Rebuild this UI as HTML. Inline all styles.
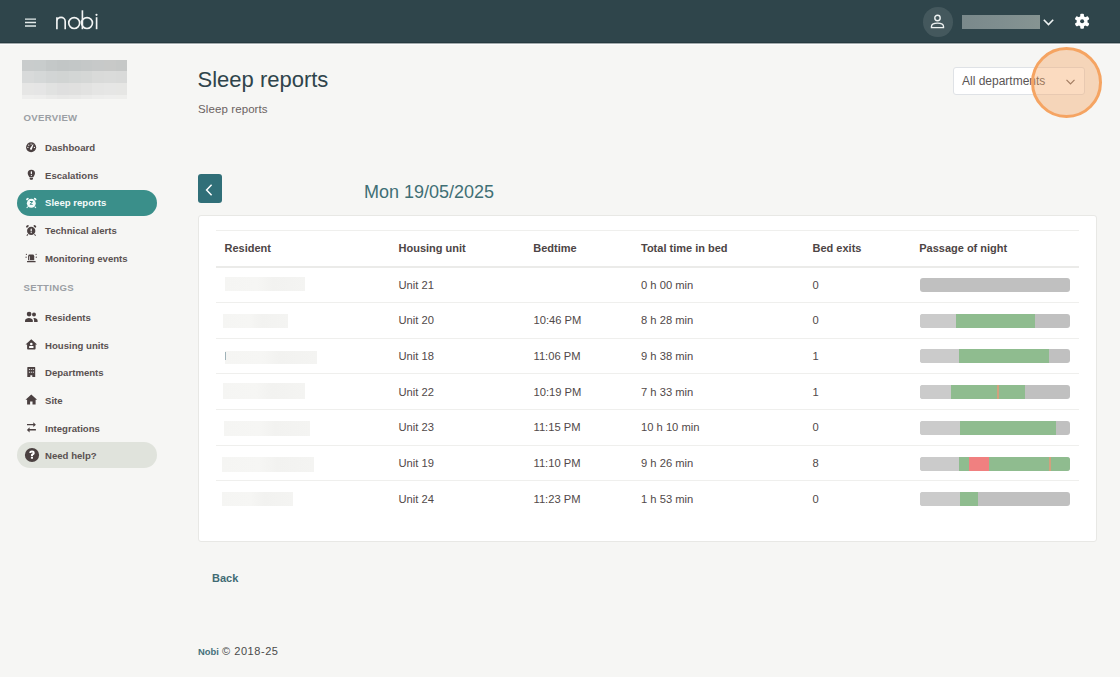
<!DOCTYPE html>
<html><head><meta charset="utf-8">
<style>
*{margin:0;padding:0;box-sizing:border-box}
html,body{width:1120px;height:677px;overflow:hidden;background:#f6f6f4;font-family:"Liberation Sans",sans-serif;position:relative}
.a{position:absolute;white-space:nowrap;line-height:1}
#hdr{position:absolute;left:0;top:0;width:1120px;height:43px;background:#2f454b;border-bottom:1px solid #263a40}
.nav{font-size:9.6px;font-weight:700;color:#5a5151;left:45px}
.sec{font-size:9.6px;font-weight:700;color:#9b9fa4;left:23.5px;letter-spacing:0.3px}
.ic{position:absolute;left:24px;width:14px;height:14px}
.th{font-size:11px;font-weight:700;color:#4d4545}
.td{font-size:11.2px;color:#514949}
.hl{position:absolute;left:215.5px;width:863.5px;height:1px;background:#efefed}
.bar{position:absolute;left:919.5px;width:150.5px;height:14px;border-radius:3px;overflow:hidden;background:#c0c0c0}
.bar i{position:absolute;top:0;height:14px;display:block}
.nm{position:absolute;height:14px;background:linear-gradient(90deg,#f5f5f3,#f6f6f4 40%,#f2f2f0 60%,#f4f4f2);filter:blur(0.7px)}
</style></head><body>
<div id="hdr"></div>
<div class="a" style="left:0;top:43px;width:1120px;height:1px;background:#a3abad"></div><div class="a" style="left:0;top:44px;width:1120px;height:1px;background:#fdfdfd"></div>
<!-- hamburger -->
<svg class="a" style="left:24px;top:14px" width="14" height="16" viewBox="0 0 14 16"><g stroke="#e4ebeb" stroke-width="1.45"><path d="M1 5.1H12M1 8.5H12M1 12H12"/></g></svg>
<!-- nobi logo -->
<svg class="a" style="left:54px;top:8px" width="48" height="24" viewBox="0 0 48 24">
 <g fill="none" stroke="#f2f4f4" stroke-width="1.65">
  <path d="M2.9 9.3V21.2M2.9 13.5A4.15 4.15 0 0 1 11.2 13.5V21.2"/>
  <circle cx="20.2" cy="15.05" r="5.45"/>
  <path d="M28.4 2.3V21.2"/>
  <circle cx="33" cy="15.05" r="5.45"/>
  <path d="M42.6 9.2V21.2"/>
 </g>
 <circle cx="42.5" cy="6.8" r="1.1" fill="#f2f4f4"/>
</svg>
<!-- avatar -->
<div class="a" style="left:923px;top:7px;width:29.5px;height:29.5px;border-radius:50%;background:#44585d"></div>
<svg class="a" style="left:930px;top:14px" width="15" height="15" viewBox="0 0 15 15">
 <g fill="none" stroke="#eef2f2" stroke-width="1.4">
  <circle cx="7.5" cy="4" r="2.7"/>
  <path d="M1.5 13.6v-1.2c0-2 2.6-3.3 6-3.3s6 1.3 6 3.3v1.2z"/>
 </g>
</svg>
<div class="a" style="left:962px;top:14.5px;width:78px;height:14.5px;background:linear-gradient(90deg,#7a898b,#7f8e8f 50%,#869492)"></div>
<svg class="a" style="left:1042px;top:17px" width="13" height="11" viewBox="0 0 13 11">
 <path d="M1.8 2.8L6.5 7.6L11.2 2.8" fill="none" stroke="#eef2f2" stroke-width="1.6"/>
</svg>
<svg class="a" style="left:1070px;top:9px" width="24" height="24" viewBox="0 0 24 24"><g transform="translate(12.1,12.3)" fill="#fff"><circle r="5.4"/><rect x="-1.85" y="-7.55" width="3.7" height="4.2" rx="1.1" transform="rotate(0)"/><rect x="-1.85" y="-7.55" width="3.7" height="4.2" rx="1.1" transform="rotate(60)"/><rect x="-1.85" y="-7.55" width="3.7" height="4.2" rx="1.1" transform="rotate(120)"/><rect x="-1.85" y="-7.55" width="3.7" height="4.2" rx="1.1" transform="rotate(180)"/><rect x="-1.85" y="-7.55" width="3.7" height="4.2" rx="1.1" transform="rotate(240)"/><rect x="-1.85" y="-7.55" width="3.7" height="4.2" rx="1.1" transform="rotate(300)"/><circle r="2" fill="#2f454b"/></g></svg>

<!-- SIDEBAR -->
<div class="a" style="left:22.2px;top:60px;width:105px;height:38.5px;overflow:hidden"><i style="position:absolute;left:0.00px;top:0.00px;width:11.97px;height:11.40px;background:#c9cccc"></i><i style="position:absolute;left:11.67px;top:0.00px;width:11.97px;height:11.40px;background:#c8cccc"></i><i style="position:absolute;left:23.33px;top:0.00px;width:11.97px;height:11.40px;background:#c4c8c8"></i><i style="position:absolute;left:35.00px;top:0.00px;width:11.97px;height:11.40px;background:#c2c6c6"></i><i style="position:absolute;left:46.67px;top:0.00px;width:11.97px;height:11.40px;background:#c3c7c7"></i><i style="position:absolute;left:58.33px;top:0.00px;width:11.97px;height:11.40px;background:#c5c8c8"></i><i style="position:absolute;left:70.00px;top:0.00px;width:11.97px;height:11.40px;background:#c7c9c9"></i><i style="position:absolute;left:81.67px;top:0.00px;width:11.97px;height:11.40px;background:#c8c9c8"></i><i style="position:absolute;left:93.33px;top:0.00px;width:11.97px;height:11.40px;background:#c6c8c7"></i><i style="position:absolute;left:0.00px;top:11.10px;width:11.97px;height:12.10px;background:#d8dada"></i><i style="position:absolute;left:11.67px;top:11.10px;width:11.97px;height:12.10px;background:#d5d8d8"></i><i style="position:absolute;left:23.33px;top:11.10px;width:11.97px;height:12.10px;background:#d2d5d5"></i><i style="position:absolute;left:35.00px;top:11.10px;width:11.97px;height:12.10px;background:#d1d4d3"></i><i style="position:absolute;left:46.67px;top:11.10px;width:11.97px;height:12.10px;background:#d3d6d5"></i><i style="position:absolute;left:58.33px;top:11.10px;width:11.97px;height:12.10px;background:#d5d7d6"></i><i style="position:absolute;left:70.00px;top:11.10px;width:11.97px;height:12.10px;background:#d9dad9"></i><i style="position:absolute;left:81.67px;top:11.10px;width:11.97px;height:12.10px;background:#dadbda"></i><i style="position:absolute;left:93.33px;top:11.10px;width:11.97px;height:12.10px;background:#d9dad9"></i><i style="position:absolute;left:0.00px;top:22.90px;width:11.97px;height:12.10px;background:#e6e6e5"></i><i style="position:absolute;left:11.67px;top:22.90px;width:11.97px;height:12.10px;background:#e5e5e5"></i><i style="position:absolute;left:23.33px;top:22.90px;width:11.97px;height:12.10px;background:#e1e2e1"></i><i style="position:absolute;left:35.00px;top:22.90px;width:11.97px;height:12.10px;background:#dfdfdf"></i><i style="position:absolute;left:46.67px;top:22.90px;width:11.97px;height:12.10px;background:#e0e0df"></i><i style="position:absolute;left:58.33px;top:22.90px;width:11.97px;height:12.10px;background:#e2e2e1"></i><i style="position:absolute;left:70.00px;top:22.90px;width:11.97px;height:12.10px;background:#e5e5e4"></i><i style="position:absolute;left:81.67px;top:22.90px;width:11.97px;height:12.10px;background:#e6e6e5"></i><i style="position:absolute;left:93.33px;top:22.90px;width:11.97px;height:12.10px;background:#e6e6e4"></i><i style="position:absolute;left:0.00px;top:34.70px;width:11.97px;height:4.10px;background:#eeeeed"></i><i style="position:absolute;left:11.67px;top:34.70px;width:11.97px;height:4.10px;background:#ededec"></i><i style="position:absolute;left:23.33px;top:34.70px;width:11.97px;height:4.10px;background:#eaeae9"></i><i style="position:absolute;left:35.00px;top:34.70px;width:11.97px;height:4.10px;background:#e8e8e7"></i><i style="position:absolute;left:46.67px;top:34.70px;width:11.97px;height:4.10px;background:#e9e9e8"></i><i style="position:absolute;left:58.33px;top:34.70px;width:11.97px;height:4.10px;background:#ebebea"></i><i style="position:absolute;left:70.00px;top:34.70px;width:11.97px;height:4.10px;background:#ededec"></i><i style="position:absolute;left:81.67px;top:34.70px;width:11.97px;height:4.10px;background:#eeeeed"></i><i style="position:absolute;left:93.33px;top:34.70px;width:11.97px;height:4.10px;background:#eeeeec"></i></div>
<div class="a sec" style="top:113.1px">OVERVIEW</div>

<div class="a" style="left:17px;top:190px;width:140px;height:26px;border-radius:13px;background:#3a8f8a"></div>
<div class="a nav" style="top:142.9px">Dashboard</div>
<div class="a nav" style="top:170.6px">Escalations</div>
<div class="a nav" style="top:198.4px;color:#f4fbfa">Sleep reports</div>
<div class="a nav" style="top:226.1px">Technical alerts</div>
<div class="a nav" style="top:253.9px">Monitoring events</div>

<div class="a sec" style="top:282.8px">SETTINGS</div>
<div class="a" style="left:17px;top:442px;width:140px;height:26px;border-radius:13px;background:#e0e3dc"></div>
<div class="a nav" style="top:312.9px">Residents</div>
<div class="a nav" style="top:340.6px">Housing units</div>
<div class="a nav" style="top:368.3px">Departments</div>
<div class="a nav" style="top:396px">Site</div>
<div class="a nav" style="top:423.7px">Integrations</div>
<div class="a nav" style="top:451.4px">Need help?</div>

<svg class="a" style="left:0;top:0" width="60" height="480" viewBox="0 0 60 480">
 <g fill="#4b4141">
  <!-- dashboard -->
  <circle cx="31.1" cy="147.2" r="5.05"/>
  <g fill="#fff">
   <path d="M32.9 144.2 L33.5 144.5 L32.1 148.6 A1.05 1.05 0 1 1 30.1 148.3 Z"/>
   <circle cx="27.9" cy="147.4" r="0.6"/>
   <circle cx="28.8" cy="145.2" r="0.6"/>
   <circle cx="31.1" cy="144.1" r="0.6"/>
   <circle cx="34.4" cy="147.4" r="0.6"/>
  </g>
  <!-- bulb -->
  <path d="M31.35 169.7 A3.65 3.65 0 0 1 35 173.35 C35 175 34 175.8 33.3 177.2 L29.4 177.2 C28.7 175.8 27.7 175 27.7 173.35 A3.65 3.65 0 0 1 31.35 169.7 Z"/>
  <rect x="29.7" y="177.7" width="3.3" height="1.6" rx="0.4"/>
  <rect x="30.2" y="179.3" width="2.3" height="0.8" rx="0.3"/>
  <g fill="#fff"><rect x="30.75" y="171.2" width="1.2" height="2.8" rx="0.5"/><circle cx="31.35" cy="175.3" r="0.65"/></g>
  <!-- sleep alarm (white on teal) -->
  <g fill="#f4fcfb">
   <circle cx="31.3" cy="203.3" r="4.45"/>
   <ellipse cx="27.4" cy="199.0" rx="1.55" ry="0.95" transform="rotate(-42 27.4 199.0)"/>
   <ellipse cx="35.2" cy="199.0" rx="1.55" ry="0.95" transform="rotate(42 35.2 199.0)"/>
   <path d="M27.4 206.2 L26.3 207.8 L27.1 208.3 L28.3 206.9 Z"/>
   <path d="M35.2 206.2 L36.3 207.8 L35.5 208.3 L34.3 206.9 Z"/>
  </g>
  <path fill="#3a8f8a" d="M29.9 201.1 H32.8 V201.9 L31.0 204.0 H32.8 V204.8 H29.8 V204.0 L31.6 201.9 H29.9 Z"/>
  <!-- tech alarm -->
  <circle cx="31.2" cy="230.9" r="4.15"/>
  <ellipse cx="27.4" cy="226.3" rx="1.6" ry="0.95" transform="rotate(-42 27.4 226.3)"/>
  <ellipse cx="34.9" cy="226.3" rx="1.6" ry="0.95" transform="rotate(42 34.9 226.3)"/>
  <path d="M27.5 233.9 L26.4 235.5 L27.2 236 L28.4 234.6 Z"/>
  <path d="M34.9 233.9 L36.0 235.5 L35.2 236 L34.0 234.6 Z"/>
  <g fill="#fff"><rect x="30.6" y="228.6" width="1.2" height="2.8" rx="0.4"/><circle cx="31.2" cy="232.6" r="0.65"/></g>
  <!-- siren -->
  <path d="M28.1 260.3 V256.2 A1.6 1.6 0 0 1 29.7 254.6 H32.6 A1.6 1.6 0 0 1 34.2 256.2 V260.3 Z"/>
  <rect x="27" y="260.9" width="8.6" height="1.4" rx="0.3"/>
  <rect x="29.1" y="256.3" width="0.8" height="3.8" fill="#fff" opacity="0.85"/>
  <circle cx="26.4" cy="254.3" r="0.65"/><circle cx="26.1" cy="257.2" r="0.65"/>
  <circle cx="36.1" cy="254.3" r="0.65"/><circle cx="36.3" cy="257.2" r="0.65"/>
  <!-- residents -->
  <circle cx="29.1" cy="314.1" r="2.35"/>
  <circle cx="34.0" cy="314.6" r="2.0"/>
  <path d="M25 321.9 V320.6 C25 318.9 27.2 317.9 28.9 317.9 C30.6 317.9 32.8 318.9 32.8 320.6 V321.9 Z"/>
  <path d="M34.1 318.1 C35.9 318.3 37.6 319.1 37.6 320.6 V321.9 H34.1 V320.6 C34.1 319.7 33.8 318.8 33.3 318.2 Z"/>
  <!-- housing units -->
  <path d="M31.3 339.2 L37.1 344.5 H35.6 V348.6 A0.9 0.9 0 0 1 34.7 349.5 H27.9 A0.9 0.9 0 0 1 27.1 348.6 V344.5 H25.5 Z"/>
  <g fill="#fff"><circle cx="31.3" cy="344" r="1.3"/><rect x="29.1" y="346.1" width="4.4" height="1.8" rx="0.5"/></g>
  <!-- departments -->
  <path d="M27.8 367 H34.7 A0.5 0.5 0 0 1 35.2 367.5 V377.1 H32.3 V375.2 H30.3 V377.1 H27.3 V367.5 A0.5 0.5 0 0 1 27.8 367 Z"/>
  <g fill="#fff">
   <rect x="28.9" y="368.9" width="1" height="1" /><rect x="30.8" y="368.9" width="1" height="1" /><rect x="32.8" y="368.9" width="1" height="1" />
   <rect x="28.9" y="371.7" width="1" height="1" /><rect x="30.8" y="371.7" width="1" height="1" /><rect x="32.8" y="371.7" width="1" height="1" />
  </g>
  <!-- site -->
  <path d="M31.3 394.5 L37.1 399.7 H35.6 V404.6 H32.5 V401.5 H30.1 V404.6 H27.1 V399.7 H25.5 Z"/>
  <!-- integrations -->
  <path d="M27 424.1 H33.3 V422.2 L35.9 424.7 L33.3 427.1 V425.3 H27 Z"/>
  <path d="M35.9 429.1 H29.6 V427.3 L26.9 429.9 L29.6 432.5 V430.6 H35.9 Z"/>
  <!-- help -->
  <circle cx="32" cy="455" r="7.1"/>
  <g fill="#fff">
   <path d="M29.3 452.9 A2.7 2.45 0 0 1 34.7 452.9 C34.7 454.3 33.7 454.8 33.0 455.2 V456.2 H30.95 V454.8 C30.95 453.9 32.6 453.6 32.6 452.9 A0.65 0.6 0 0 0 31.3 452.9 Z"/>
   <rect x="30.9" y="457" width="2.1" height="1.7"/>
  </g>
 </g>
</svg>

<!-- MAIN -->
<div class="a" style="left:197.5px;top:68.5px;font-size:22px;color:#2f444b">Sleep reports</div>
<div class="a" style="left:198px;top:104.4px;font-size:11.5px;letter-spacing:0.1px;color:#6b6262">Sleep reports</div>

<div class="a" style="left:953px;top:67px;width:131.5px;height:27.5px;background:#fff;border:1px solid #dfe2e6;border-radius:3px"></div>
<div class="a" style="left:962px;top:74.8px;font-size:12px;color:#5a5555">All departments</div>
<svg class="a" style="left:1065px;top:77.6px" width="11" height="8" viewBox="0 0 11 8">
 <path d="M1.5 1.8L5.5 5.8L9.5 1.8" fill="none" stroke="#6b6262" stroke-width="1.2"/>
</svg>

<div class="a" style="left:198px;top:174.2px;width:24.3px;height:29.2px;border-radius:3px;background:#306f78"></div>
<svg class="a" style="left:203px;top:182px" width="12" height="16" viewBox="0 0 12 16">
 <path d="M8.6 2.8L3.6 8L8.6 13.2" fill="none" stroke="#fff" stroke-width="1.5"/>
</svg>
<div class="a" style="left:364px;top:182.7px;font-size:18px;color:#3f6f75">Mon 19/05/2025</div>

<div class="a" style="left:198px;top:215px;width:899px;height:327px;background:#fff;border:1px solid #e8e8e5;border-radius:3px"></div>
<div class="hl" style="top:230px"></div>
<div class="hl" style="top:266px;height:1.6px;background:#ebebe9"></div>
<div class="a th" style="left:224.5px;top:243.09px">Resident</div>
<div class="a th" style="left:398.5px;top:243.09px">Housing unit</div>
<div class="a th" style="left:533.3px;top:243.09px">Bedtime</div>
<div class="a th" style="left:641px;top:243.09px">Total time in bed</div>
<div class="a th" style="left:812.5px;top:243.09px">Bed exits</div>
<div class="a th" style="left:919.2px;top:243.09px">Passage of night</div>
<div class="nm" style="left:224.6px;top:277.1px;width:80.5px;height:13.9px"></div>
<div class="a td" style="left:398.5px;top:279.62px">Unit 21</div>
<div class="a td" style="left:641px;top:279.62px">0 h 00 min</div>
<div class="a td" style="left:812.5px;top:279.62px">0</div>
<div class="bar" style="top:278.10px"></div>
<div class="hl" style="top:301.98px"></div>
<div class="nm" style="left:223.1px;top:314px;width:64.6px;height:13.6px"></div>
<div class="a td" style="left:398.5px;top:315.30px">Unit 20</div>
<div class="a td" style="left:533.5px;top:315.30px">10:46 PM</div>
<div class="a td" style="left:641px;top:315.30px">8 h 28 min</div>
<div class="a td" style="left:812.5px;top:315.30px">0</div>
<div class="bar" style="top:313.78px"><i style="left:0;width:36.5px;background:#cbcbcb"></i><i style="left:36.5px;width:79.0px;background:#8fbc8f"></i></div>
<div class="hl" style="top:337.66px"></div>
<div class="nm" style="left:225.3px;top:350.5px;width:91.7px;height:13.3px"></div>
<div class="a td" style="left:398.5px;top:350.98px">Unit 18</div>
<div class="a td" style="left:533.5px;top:350.98px">11:06 PM</div>
<div class="a td" style="left:641px;top:350.98px">9 h 38 min</div>
<div class="a td" style="left:812.5px;top:350.98px">1</div>
<div class="bar" style="top:349.46px"><i style="left:0;width:39.1px;background:#cbcbcb"></i><i style="left:39.1px;width:90.3px;background:#8fbc8f"></i></div>
<div class="hl" style="top:373.34px"></div>
<div class="nm" style="left:223px;top:382.9px;width:81.5px;height:16.1px"></div>
<div class="a td" style="left:398.5px;top:386.66px">Unit 22</div>
<div class="a td" style="left:533.5px;top:386.66px">10:19 PM</div>
<div class="a td" style="left:641px;top:386.66px">7 h 33 min</div>
<div class="a td" style="left:812.5px;top:386.66px">1</div>
<div class="bar" style="top:385.14px"><i style="left:0;width:31.6px;background:#cbcbcb"></i><i style="left:31.6px;width:73.9px;background:#8fbc8f"></i><i style="left:77.8px;width:2.0px;background:#d1a07e"></i></div>
<div class="hl" style="top:409.02px"></div>
<div class="nm" style="left:223.8px;top:420.5px;width:86.4px;height:15.0px"></div>
<div class="a td" style="left:398.5px;top:422.34px">Unit 23</div>
<div class="a td" style="left:533.5px;top:422.34px">11:15 PM</div>
<div class="a td" style="left:641px;top:422.34px">10 h 10 min</div>
<div class="a td" style="left:812.5px;top:422.34px">0</div>
<div class="bar" style="top:420.82px"><i style="left:0;width:40.5px;background:#cbcbcb"></i><i style="left:40.5px;width:96.1px;background:#8fbc8f"></i></div>
<div class="hl" style="top:444.70px"></div>
<div class="nm" style="left:221.9px;top:456.6px;width:92.5px;height:15.4px"></div>
<div class="a td" style="left:398.5px;top:458.02px">Unit 19</div>
<div class="a td" style="left:533.5px;top:458.02px">11:10 PM</div>
<div class="a td" style="left:641px;top:458.02px">9 h 26 min</div>
<div class="a td" style="left:812.5px;top:458.02px">8</div>
<div class="bar" style="top:456.50px"><i style="left:0;width:39.1px;background:#cbcbcb"></i><i style="left:39.1px;width:111.4px;background:#8fbc8f"></i><i style="left:49.8px;width:19.3px;background:#f08080"></i><i style="left:129.1px;width:2.0px;background:#d1a07e"></i></div>
<div class="hl" style="top:480.38px"></div>
<div class="nm" style="left:221.9px;top:492.3px;width:71.4px;height:13.5px"></div>
<div class="a td" style="left:398.5px;top:493.70px">Unit 24</div>
<div class="a td" style="left:533.5px;top:493.70px">11:23 PM</div>
<div class="a td" style="left:641px;top:493.70px">1 h 53 min</div>
<div class="a td" style="left:812.5px;top:493.70px">0</div>
<div class="bar" style="top:492.18px"><i style="left:0;width:40.5px;background:#cbcbcb"></i><i style="left:40.5px;width:17.9px;background:#8fbc8f"></i></div>
<div class="a" style="left:225px;top:352px;width:1px;height:8px;background:#9fb2b8"></div>

<div class="a" style="left:212px;top:572.8px;font-size:11px;font-weight:700;color:#3f6b73">Back</div>
<div class="a" style="left:198px;top:646.6px;font-size:9.4px;font-weight:700;color:#45717a">Nobi</div><div class="a" style="left:222px;top:645.5px;font-size:11px;color:#4a4a4a;letter-spacing:0.55px">© 2018-25</div>

<!-- orange circle -->
<div class="a" style="left:1030.5px;top:46.8px;width:71px;height:71px;border-radius:50%;border:3px solid #f5a462;background:rgba(245,164,98,0.4)"></div>
</body></html>
